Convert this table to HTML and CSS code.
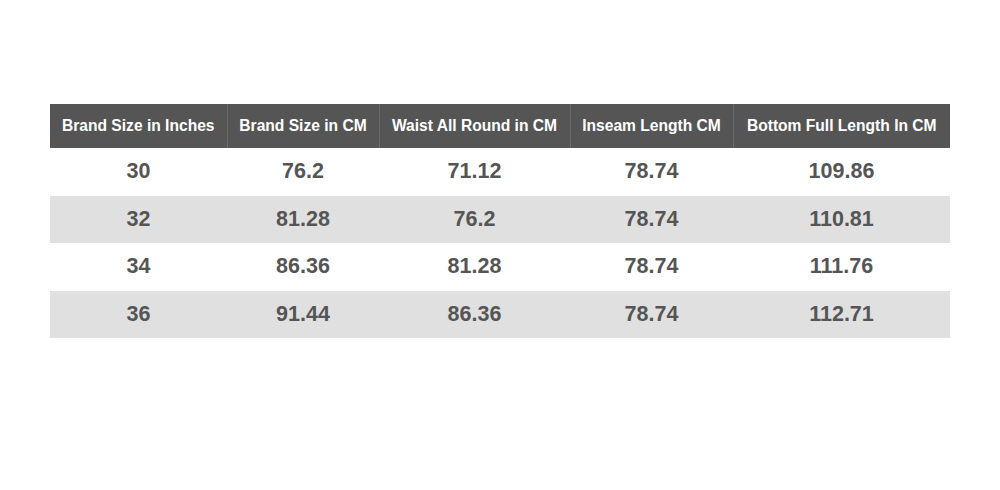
FILE: index.html
```html
<!DOCTYPE html>
<html>
<head>
<meta charset="utf-8">
<link rel="stylesheet" href="styles.css">
</head>
<body>
<div class="page">
<table class="size-table">
<colgroup>
<col class="c1"><col class="c2"><col class="c3"><col class="c4"><col class="c5">
</colgroup>
<thead>
<tr><th>Brand Size in Inches</th><th>Brand Size in CM</th><th>Waist All Round in CM</th><th>Inseam Length CM</th><th>Bottom Full Length In CM</th></tr>
</thead>
<tbody>
<tr><td>30</td><td>76.2</td><td>71.12</td><td>78.74</td><td>109.86</td></tr>
<tr class="alt"><td>32</td><td>81.28</td><td>76.2</td><td>78.74</td><td>110.81</td></tr>
<tr><td>34</td><td>86.36</td><td>81.28</td><td>78.74</td><td>111.76</td></tr>
<tr class="alt"><td>36</td><td>91.44</td><td>86.36</td><td>78.74</td><td>112.71</td></tr>
</tbody>
</table>
</div>
</body>
</html>
```
FILE: styles.css
```css
html, body {
  margin: 0;
  padding: 0;
  background: #ffffff;
}
.page {
  padding: 104px 50px 0 50px;
  font-family: "Liberation Sans", Arial, sans-serif;
}
.size-table {
  width: 900px;
  border-collapse: collapse;
  table-layout: fixed;
}
.c1 { width: 177px; }
.c2 { width: 152px; }
.c3 { width: 191px; }
.c4 { width: 163px; }
.c5 { width: 217px; }
.size-table th {
  background: #555555;
  color: #ffffff;
  font-weight: bold;
  font-size: 15.6px;
  height: 44px;
  padding: 0;
  text-align: center;
  border-left: 1px solid #6a6a6a;
  white-space: nowrap;
}
.size-table th:first-child { border-left: none; }
.size-table td {
  color: #555555;
  font-weight: bold;
  font-size: 21.5px;
  height: 47.5px;
  padding: 0;
  text-align: center;
}
.size-table tr.alt td { background: #e0e0e0; }
```
